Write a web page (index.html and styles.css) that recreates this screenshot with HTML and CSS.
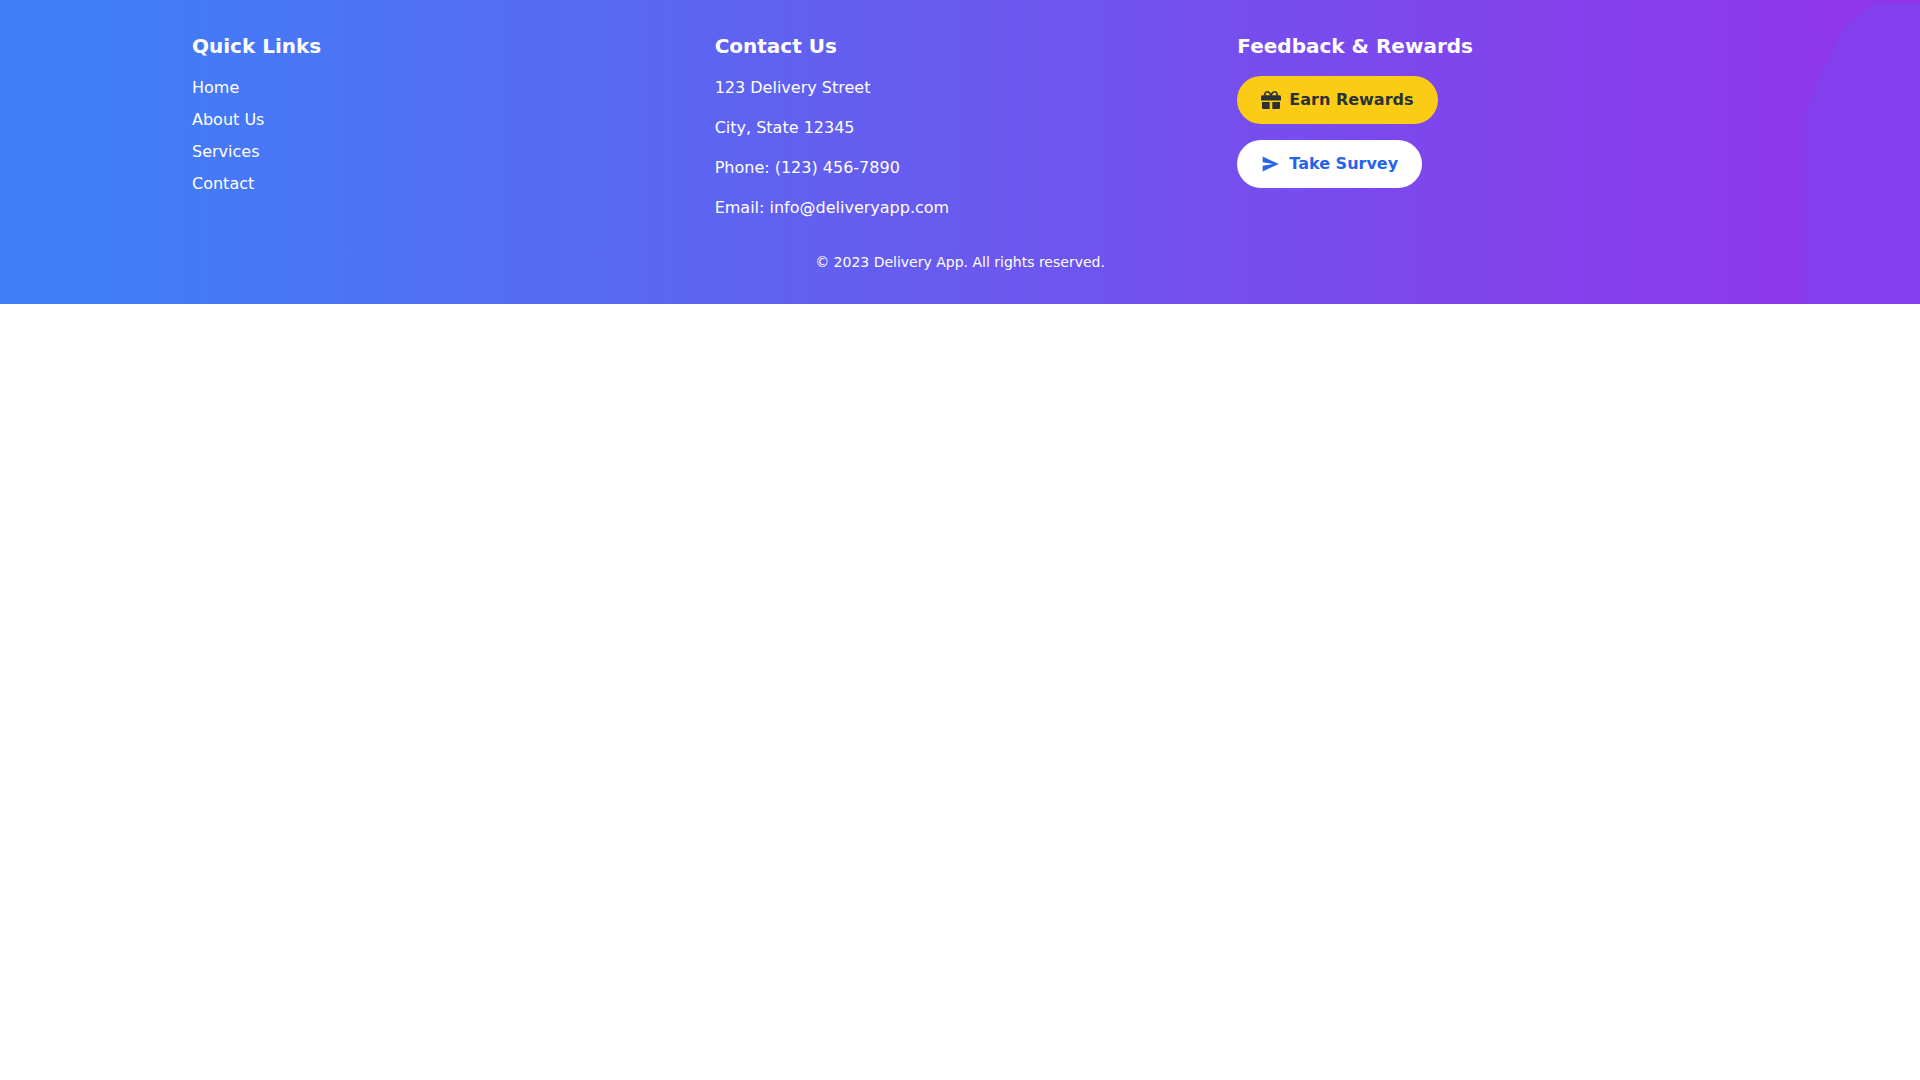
FILE: index.html
```html
<!DOCTYPE html>
<html lang="en">
<head>
<meta charset="utf-8">
<meta name="viewport" content="width=device-width, initial-scale=1">
<title>Delivery App</title>
<link rel="stylesheet" href="styles.css">
</head>
<body>
<footer class="footer">
  <svg class="footer-shape" viewBox="0 0 115 301" preserveAspectRatio="none" aria-hidden="true">
    <path d="M0 301V111L5 97L15 73L37 28Q50 10 72 0H115V301Z"/>
  </svg>
  <div class="container">
    <div class="columns">
      <section>
        <h3 class="heading">Quick Links</h3>
        <ul class="links">
          <li><a href="#">Home</a></li>
          <li><a href="#">About Us</a></li>
          <li><a href="#">Services</a></li>
          <li><a href="#">Contact</a></li>
        </ul>
      </section>
      <section>
        <h3 class="heading">Contact Us</h3>
        <div class="contact">
          <p>123 Delivery Street</p>
          <p>City, State 12345</p>
          <p>Phone: (123) 456-7890</p>
          <p>Email: info@deliveryapp.com</p>
        </div>
      </section>
      <section>
        <h3 class="heading">Feedback &amp; Rewards</h3>
        <div class="actions">
          <button class="button button-rewards" type="button">
            <svg class="icon" viewBox="0 0 20 20" aria-hidden="true">
              <path class="bow" d="M10 5.500C9 3 8 1.800 6.300 1.800C4.300 1.800 3.200 3.800 4.400 5.500M10 5.500C11 3 12 1.800 13.700 1.800C15.700 1.800 16.800 3.800 15.600 5.500"/>
              <path d="M1.500 5.200H18.500A1.500 1.500 0 0 1 20 6.700V10.600H0V6.700A1.500 1.500 0 0 1 1.500 5.200Z"/>
              <path d="M1 12H8.700V19H2.500A1.500 1.500 0 0 1 1 17.500ZM11.300 12H19V17.500A1.500 1.500 0 0 1 17.500 19H11.300Z"/>
            </svg>
            Earn Rewards
          </button>
          <button class="button button-survey" type="button">
            <svg class="icon" viewBox="0 0 24 24" aria-hidden="true">
              <path d="M2 20.900L21.300 12 2 3.100V10l13 2-13 2z"/>
            </svg>
            Take Survey
          </button>
        </div>
      </section>
    </div>
    <p class="copyright">© 2023 Delivery App. All rights reserved.</p>
  </div>
</footer>
</body>
</html>
```
FILE: styles.css
```css
* { box-sizing: border-box; margin: 0; padding: 0; }

body {
  background: #fff;
  font-family: "DejaVu Sans", sans-serif;
  font-size: 16px;
  line-height: 24px;
}

.footer {
  position: relative;
  overflow: hidden;
  padding: 32px 0;
  color: #fff;
  background: linear-gradient(to right, #407ef8 5%, #6b58ef 52%, #9333ea 100%);
}

.footer-shape {
  position: absolute;
  right: 0;
  bottom: 0;
  width: 115px;
  height: 301px;
  fill: #833fed;
}

.container {
  position: relative;
  width: 80%;
  margin: 0 auto;
}

.columns {
  display: grid;
  grid-template-columns: repeat(3, 1fr);
  gap: 32px;
}

.heading {
  margin-bottom: 16px;
  font-size: 20px;
  line-height: 28px;
  font-weight: 700;
}

.links { display: grid; gap: 8px; list-style: none; }
.links a { color: inherit; text-decoration: none; }

.contact { display: grid; gap: 16px; }

.actions {
  display: flex;
  flex-direction: column;
  align-items: flex-start;
  gap: 16px;
}

.button {
  display: flex;
  align-items: center;
  gap: 8px;
  padding: 12px 24px;
  border: 0;
  border-radius: 24px;
  font: inherit;
  font-weight: 700;
  cursor: pointer;
}

.button-rewards { background: #facc15; color: #2b3236; }
.button-survey { background: #fff; color: #2563eb; }

.icon { width: 20px; height: 20px; fill: currentColor; }
.bow { fill: none; stroke: currentColor; stroke-width: 1.6; }

.copyright {
  margin-top: 32px;
  font-size: 14px;
  line-height: 20px;
  text-align: center;
}
```
